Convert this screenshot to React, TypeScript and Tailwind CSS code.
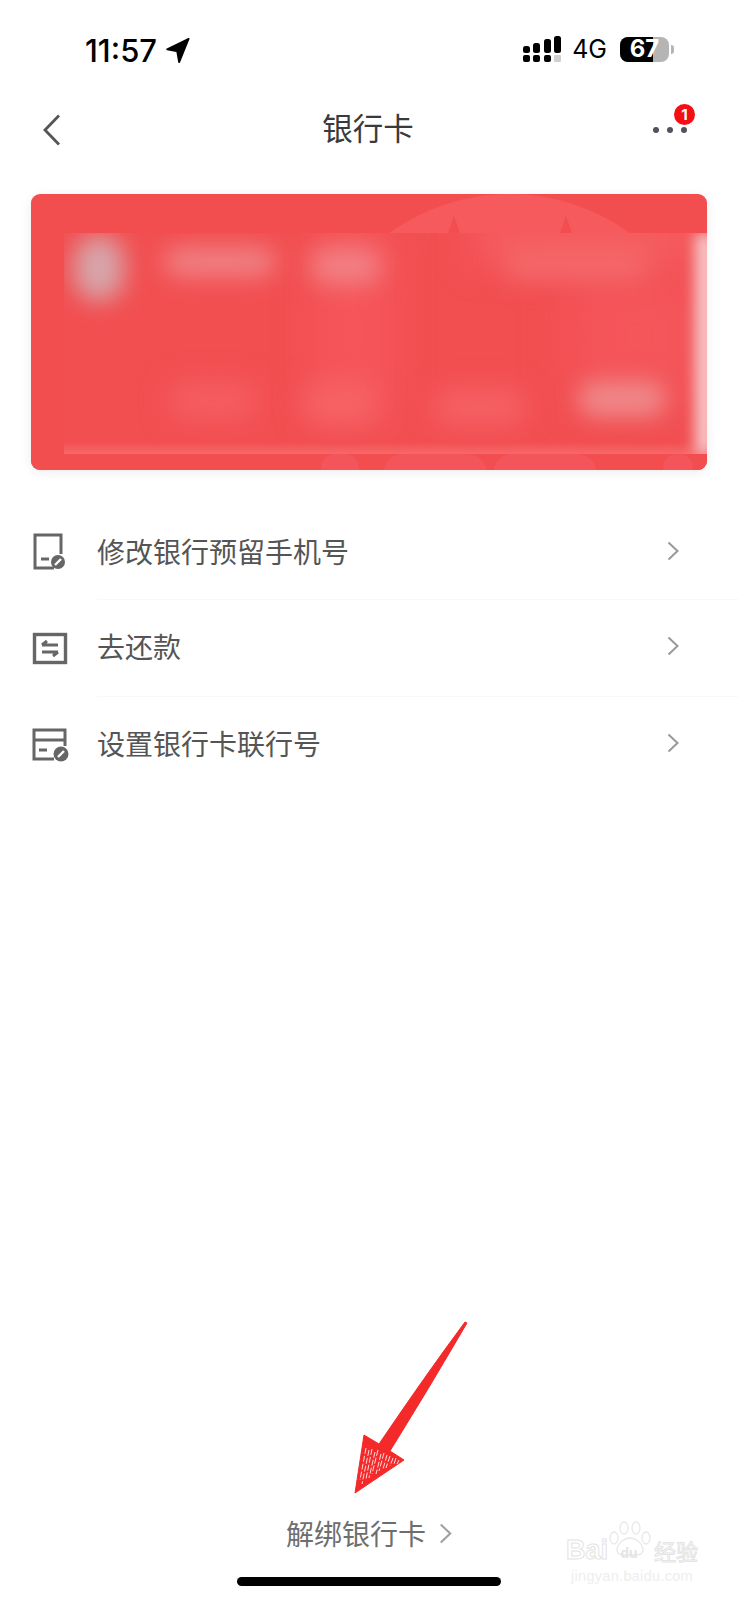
const cjk = "font-['Noto_Sans_CJK_SC','Noto_Sans',sans-serif]";

function SignalIcon() {
  return (
    <svg width="38" height="26" viewBox="0 0 38 26" fill="#000">
      <rect x="0" y="19" width="7" height="7" rx="2" />
      <rect x="10" y="19" width="7" height="7" rx="2" />
      <rect x="21" y="19" width="7" height="7" rx="2" />
      <rect x="31" y="19" width="7" height="7" rx="1" fill="#cfcfcf" />
      <rect x="0" y="10" width="7" height="7" rx="2.5" />
      <rect x="10" y="7" width="7" height="10" rx="2.5" />
      <rect x="21" y="3" width="7" height="14" rx="2.5" />
      <rect x="31" y="0" width="7" height="17" rx="2.5" />
    </svg>
  );
}

function Battery() {
  return (
    <div className="flex items-center">
      <div className="relative flex h-[25px] w-[49px] items-center justify-center rounded-[8px] bg-[#b5b5b5]">
        <div className="absolute inset-y-0 left-0 w-[33px] rounded-l-[8px] bg-black" />
        <span className="relative text-[24px] leading-none font-bold text-white font-['Inter',sans-serif]">67</span>
      </div>
      <div className="ml-[2px] h-[9px] w-[3px] rounded-r-full bg-[#b5b5b5]" />
    </div>
  );
}

function PhoneEditIcon() {
  return (
    <svg width="36" height="40" viewBox="0 0 36 40" fill="none">
      <path d="M29 22V3H3v33h19" stroke="#666" strokeWidth="3" />
      <path d="M9 27h8" stroke="#666" strokeWidth="3" />
      <circle cx="26" cy="30" r="7" fill="#666" />
      <path d="M23 33l6-6" stroke="#fff" strokeWidth="2.4" />
    </svg>
  );
}

function RepayIcon() {
  return (
    <svg width="36" height="34" viewBox="0 0 36 34" fill="none">
      <rect x="2.5" y="2.5" width="31" height="28" stroke="#666" strokeWidth="3.4" />
      <path d="M10 13h16M10 13l5-4M26 20H10M26 20l-5 4" stroke="#666" strokeWidth="3" />
    </svg>
  );
}

function CardEditIcon() {
  return (
    <svg width="37" height="36" viewBox="0 0 37 36" fill="none">
      <path d="M33 18V2H2v29h20" stroke="#666" strokeWidth="3" />
      <path d="M2 12h31" stroke="#666" strokeWidth="3" />
      <path d="M7 22h8" stroke="#666" strokeWidth="3" />
      <circle cx="29" cy="26" r="7.5" fill="#666" />
      <path d="M26 29l6-6" stroke="#fff" strokeWidth="2.4" />
    </svg>
  );
}

function Chevron({ className, color = "#999" }: { className: string; color?: string }) {
  return (
    <svg className={className} viewBox="0 0 12 20" fill="none">
      <path d="M1.5 1.5L10.5 10L1.5 18.5" stroke={color} strokeWidth="2" />
    </svg>
  );
}

const rows = [
  { icon: <PhoneEditIcon />, label: "修改银行预留手机号", lift: "pb-[1px] border-b border-[#f8f8f8]" },
  { icon: <RepayIcon />, label: "去还款", lift: "pb-[4px] border-b border-[#f8f8f8]" },
  { icon: <CardEditIcon />, label: "设置银行卡联行号", lift: "pb-[5px]" },
];

function BankCard() {
  return (
    <div className="relative mx-[31px] h-[276px] overflow-hidden rounded-[9px] bg-[#f24e50] shadow-[0_2px_12px_rgba(0,0,0,0.08)]">
      {/* card artwork behind the blurred area */}
      <div className="absolute top-0 left-[273px] h-[411px] w-[411px] rounded-full bg-[#f65a5c]" />
      <div className="absolute top-[22px] left-[417px] h-[17px] w-[12px] bg-[#f24e50] [clip-path:polygon(50%_0,100%_100%,0_100%)]" />
      <div className="absolute top-[22px] left-[529px] h-[17px] w-[12px] bg-[#f24e50] [clip-path:polygon(50%_0,100%_100%,0_100%)]" />
      <div className="absolute top-0 right-0 bottom-0 left-0 bg-[linear-gradient(to_bottom,transparent_260px,#f24e50_260px)]" />
      <div className="absolute bottom-[-16px] left-[290px] h-[32px] w-[38px] rounded-t-[14px] bg-[#f4555a]" />
      <div className="absolute bottom-[-16px] left-[352px] h-[32px] w-[104px] rounded-t-[20px] bg-[#f4555a]" />
      <div className="absolute bottom-[-16px] left-[462px] h-[32px] w-[104px] rounded-t-[20px] bg-[#f4555a]" />
      <div className="absolute right-[14px] bottom-[-16px] h-[32px] w-[30px] rounded-t-[14px] bg-[#f4555a]" />

      {/* blurred card details */}
      <div className="absolute top-[39px] right-0 left-[33px] h-[221px] overflow-hidden bg-[#f24f51]">
        <div className="absolute top-[-10px] left-[250px] h-[200px] w-[80px] bg-[#f5565a] blur-[18px]" />
        <div className="absolute top-[40px] left-[510px] h-[130px] w-[130px] bg-[#f4565a] blur-[24px]" />
        <div className="absolute top-[-16px] left-[410px] h-[44px] w-[220px] bg-[#f65f62] blur-[18px]" />
        <div className="absolute top-[2px] left-[10px] h-[66px] w-[50px] rounded-full bg-[#d6a6ab] blur-[12px]" />
        <div className="absolute top-[15px] left-[100px] h-[28px] w-[112px] rounded-full bg-[#ef8487] blur-[12px]" />
        <div className="absolute top-[15px] left-[246px] h-[36px] w-[72px] rounded-full bg-[#f18185] blur-[12px]" />
        <div className="absolute top-[16px] left-[440px] h-[30px] w-[145px] rounded-full bg-[#f46a6d] blur-[13px]" />
        <div className="absolute top-[150px] left-[104px] h-[36px] w-[90px] rounded-full bg-[#f55e62] blur-[14px]" />
        <div className="absolute top-[150px] left-[238px] h-[40px] w-[76px] rounded-full bg-[#f66367] blur-[14px]" />
        <div className="absolute top-[158px] left-[370px] h-[32px] w-[92px] rounded-full bg-[#f66367] blur-[14px]" />
        <div className="absolute top-[148px] left-[514px] h-[36px] w-[88px] rounded-full bg-[#ef8789] blur-[11px]" />
        <div className="absolute inset-x-0 bottom-0 h-[12px] bg-[linear-gradient(to_bottom,#f24f51,#f6686a)]" />
        <div className="absolute top-0 right-[-8px] bottom-0 w-[20px] bg-[#f7c6c8] blur-[7px]" />
      </div>
    </div>
  );
}

function Watermark() {
  const outline = "text-white [-webkit-text-stroke:1px_#e4e4e4]";
  return (
    <div className="absolute top-[1520px] left-[566px] flex w-[132px] flex-col items-center font-['Liberation_Sans',sans-serif]">
      <svg className="absolute top-0 left-[40px]" width="48" height="36" viewBox="0 0 48 36" fill="none" stroke="#e8e8e8" strokeWidth="1.3">
        <ellipse cx="8" cy="18" rx="4" ry="6" />
        <ellipse cx="18" cy="8" rx="4" ry="6" />
        <ellipse cx="30" cy="8" rx="4" ry="6" />
        <ellipse cx="40" cy="18" rx="4" ry="6" />
        <path d="M24 18c-6 0-13 6-13 12 0 4 4 5 7 5h12c3 0 7-1 7-5 0-6-7-12-13-12z" />
      </svg>
      <div className="relative mt-[17px] flex h-[26px] w-full items-center justify-between text-[27px] leading-none font-bold">
        <span className={outline}>Bai</span>
        <span className="mt-[6px] mr-[4px] text-[14px] text-[#e4e4e4]">du</span>
        <span className={`text-[22px] font-normal ${cjk} ${outline}`}>经验</span>
      </div>
      <span className="mt-[4px] text-[14.5px] leading-[18px] tracking-[0.3px] text-[#eeeeee]">jingyan.baidu.com</span>
    </div>
  );
}

function AnnotationArrow() {
  return (
    <svg className="absolute top-[1320px] left-[350px]" width="122" height="176" viewBox="350 1320 122 176">
      <path
        d="M467 1323 Q428 1390 390 1451 L404 1460 L355 1493 L364 1435 L379 1444 Q425 1376 465 1322 Z"
        fill="#f42a2a"
        stroke="#f42a2a"
        strokeWidth="1"
        strokeLinejoin="round"
      />
      <path
        d="M366 1448l-6 32M369 1450l-7 34M372 1449l-6 30M375 1452l-6 26M378 1450l-6 24M381 1454l-5 20M384 1453l-5 18M387 1455l-4 14M390 1456l-4 12M393 1458l-3 8M396 1458l-2 6M399 1460l-2 4"
        stroke="#ffd9d9"
        strokeWidth="1"
        strokeDasharray="6 2"
      />
    </svg>
  );
}

export default function App() {
  return (
    <div className={`relative flex h-[1600px] w-[738px] flex-col overflow-hidden bg-white ${cjk}`}>
      {/* status bar */}
      <div className="flex h-[100px] items-start justify-between pt-[36px] pr-[64px] pl-[85px]">
        <div className="flex h-[28px] items-center gap-[9px]">
          <span className="text-[31px] leading-none font-medium text-black font-['Inter',sans-serif]">11:57</span>
          <svg width="24" height="25" viewBox="0 0 24 25" fill="#000">
            <path d="M23.5 1L14 24.5c-.4.8-1.6.7-1.8-.2L10.4 14 1 12.3c-.9-.2-1-1.4-.2-1.8L22.3.1c.8-.4 1.5.2 1.2.9z" />
          </svg>
        </div>
        <div className="flex h-[26px] items-center">
          <SignalIcon />
          <span className="mr-[13px] ml-[11px] text-[25px] leading-none text-black font-['Inter',sans-serif]">4G</span>
          <Battery />
        </div>
      </div>

      {/* nav bar */}
      <div className="relative flex h-[58px] items-center justify-center">
        <svg className="absolute top-[14px] left-[42px]" width="19" height="32" viewBox="0 0 19 32" fill="none">
          <path d="M17 1.5L3 16L17 30.5" stroke="#555" strokeWidth="2.8" />
        </svg>
        <span className="mr-[2px] mb-[4px] text-[30.5px] leading-none text-[#3a3a3a]">银行卡</span>
        <div className="absolute top-[27px] left-[653px] flex gap-[8px]">
          <span className="h-[6px] w-[6px] rounded-full bg-[#50525c]" />
          <span className="h-[6px] w-[6px] rounded-full bg-[#50525c]" />
          <span className="h-[6px] w-[6px] rounded-full bg-[#50525c]" />
        </div>
        <span className="absolute top-[4px] left-[674px] flex h-[21px] w-[21px] items-center justify-center rounded-full bg-[#f40f14] text-[15px] leading-none font-bold text-white font-['Inter',sans-serif]">
          1
        </span>
      </div>

      <div className="mt-[36px]">
        <BankCard />
      </div>

      {/* actions */}
      <div className="mt-[33px]">
        {rows.map((row) => (
          <div key={row.label} className="flex h-[97px] items-center">
            <div className="flex w-[97px] shrink-0 justify-center pl-[3px]">{row.icon}</div>
            <div className={`flex h-full flex-1 items-center justify-between pr-[59px] ${row.lift}`}>
              <span className="text-[28px] leading-none text-[#555]">{row.label}</span>
              <Chevron className="h-[20px] w-[12px]" />
            </div>
          </div>
        ))}
      </div>

      <div className="flex-1" />

      {/* unbind link */}
      <div className="mb-[2px] flex items-center justify-center gap-[13px]">
        <span className="text-[28px] leading-none text-[#6e6e6e]">解绑银行卡</span>
        <Chevron className="h-[21px] w-[13px]" color="#a0a0a0" />
      </div>
      <div className="mt-[28px] mb-[14px] flex justify-center">
        <div className="h-[9px] w-[264px] rounded-full bg-black" />
      </div>

      <AnnotationArrow />
      <Watermark />
    </div>
  );
}
